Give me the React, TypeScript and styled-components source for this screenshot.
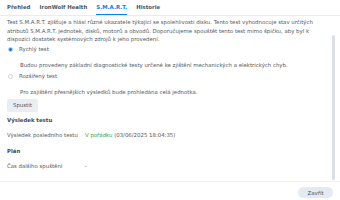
import React from 'react';
import styled, { createGlobalStyle } from 'styled-components';

const Global = createGlobalStyle`
  html, body { margin: 0; padding: 0; background: #fff; }
  body { font-family: "DejaVu Sans", Verdana, sans-serif; color: #505a64; }
`;

const Page = styled.div`
  width: 340px;
  height: 200px;
  display: flex;
  flex-direction: column;
  overflow: hidden;
  font-size: 5.4px;
`;

const TabBar = styled.div`
  display: flex;
  height: 16px;
  padding: 0 7px;
  border-bottom: 1px solid #e8ecf0;
  box-sizing: border-box;
`;

const Tab = styled.div<{ active?: boolean }>`
  display: flex;
  align-items: center;
  margin-right: 9px;
  font-weight: bold;
  color: ${p => (p.active ? '#0086e5' : '#4c5662')};
  border-bottom: ${p => (p.active ? '1px solid #0086e5' : '1px solid transparent')};
`;

const Body = styled.div`
  position: relative;
  flex: 1;
  padding: 2px 7px 0 7px;
  overflow: hidden;
`;

const Thumb = styled.div`
  position: absolute;
  right: 5px;
  top: 19px;
  width: 3px;
  height: 145px;
  border-radius: 2px;
  background: #dcdfe3;
`;

const Para = styled.p`
  margin: 0;
  line-height: 8.5px;
`;

const RadioRow = styled.div`
  display: flex;
  align-items: center;
  gap: 6px;
  margin-top: 1px;
  height: 9px;
  padding-left: 1px;
`;

const Radio = styled.span<{ checked?: boolean }>`
  width: 5px;
  height: 5px;
  border-radius: 50%;
  box-sizing: border-box;
  border: 1px solid ${p => (p.checked ? '#b9d6f5' : '#cfd5dc')};
  background: ${p => (p.checked ? '#1d78d8' : '#fff')};
`;

const Hint = styled.div`
  padding-left: 13px;
  margin: 7px 0 2px;
  line-height: 9px;
`;

const Button = styled.button`
  display: block;
  font: inherit;
  color: #4c5662;
  background: #eaeef3;
  border: none;
  border-radius: 2px;
  height: 13px;
  padding: 0 6px;
  margin-top: 1px;
`;

const Section = styled.div<{ gap: number }>`
  font-weight: bold;
  color: #414b55;
  margin-top: ${p => p.gap}px;
  line-height: 9px;
`;

const Row = styled.div`
  display: flex;
  margin-top: 6px;
  line-height: 9px;
`;

const Label = styled.span`
  width: 78px;
`;

const Ok = styled.span`
  color: #2aa336;
`;

const Footer = styled.div`
  height: 18px;
  border-top: 1px solid #eef0f2;
  display: flex;
  justify-content: flex-end;
  align-items: center;
  padding: 0 7px;
`;

const Pill = styled.button`
  font: inherit;
  color: #4c5662;
  background: #e4eaf1;
  border: none;
  border-radius: 6px;
  height: 11px;
  width: 35px;
  margin-top: 3px;
`;

export default function App() {
  return (
    <Page>
      <Global />
      <TabBar>
        <Tab>Přehled</Tab>
        <Tab>IronWolf Health</Tab>
        <Tab active>S.M.A.R.T.</Tab>
        <Tab>Historie</Tab>
      </TabBar>
      <Body>
        <Para>
          Test S.M.A.R.T. zjišťuje a hlásí různé ukazatele týkající se spolehlivosti disku. Tento test vyhodnocuje stav určitých
          atributů S.M.A.R.T. jednotek, disků, motorů a obvodů. Doporučujeme spouštět tento test mimo špičku, aby byl k
          dispozici dostatek systémových zdrojů k jeho provedení.
        </Para>
        <RadioRow>
          <Radio checked />
          <span>Rychlý test</span>
        </RadioRow>
        <Hint>Budou provedeny základní diagnostické testy určené ke zjištění mechanických a elektrických chyb.</Hint>
        <RadioRow>
          <Radio />
          <span>Rozšířený test</span>
        </RadioRow>
        <Hint>Pro zajištění přesnějších výsledků bude prohledána celá jednotka.</Hint>
        <Button>Spustit</Button>
        <Section gap={4}>Výsledek testu</Section>
        <Row>
          <Label>Výsledek posledního testu</Label>
          <span>
            <Ok>V pořádku</Ok> (03/06/2025 18:04:35)
          </span>
        </Row>
        <Section gap={7}>Plán</Section>
        <Row>
          <Label>Čas dalšího spuštění</Label>
          <span>-</span>
        </Row>
        <Thumb />
      </Body>
      <Footer>
        <Pill>Zavřít</Pill>
      </Footer>
    </Page>
  );
}
